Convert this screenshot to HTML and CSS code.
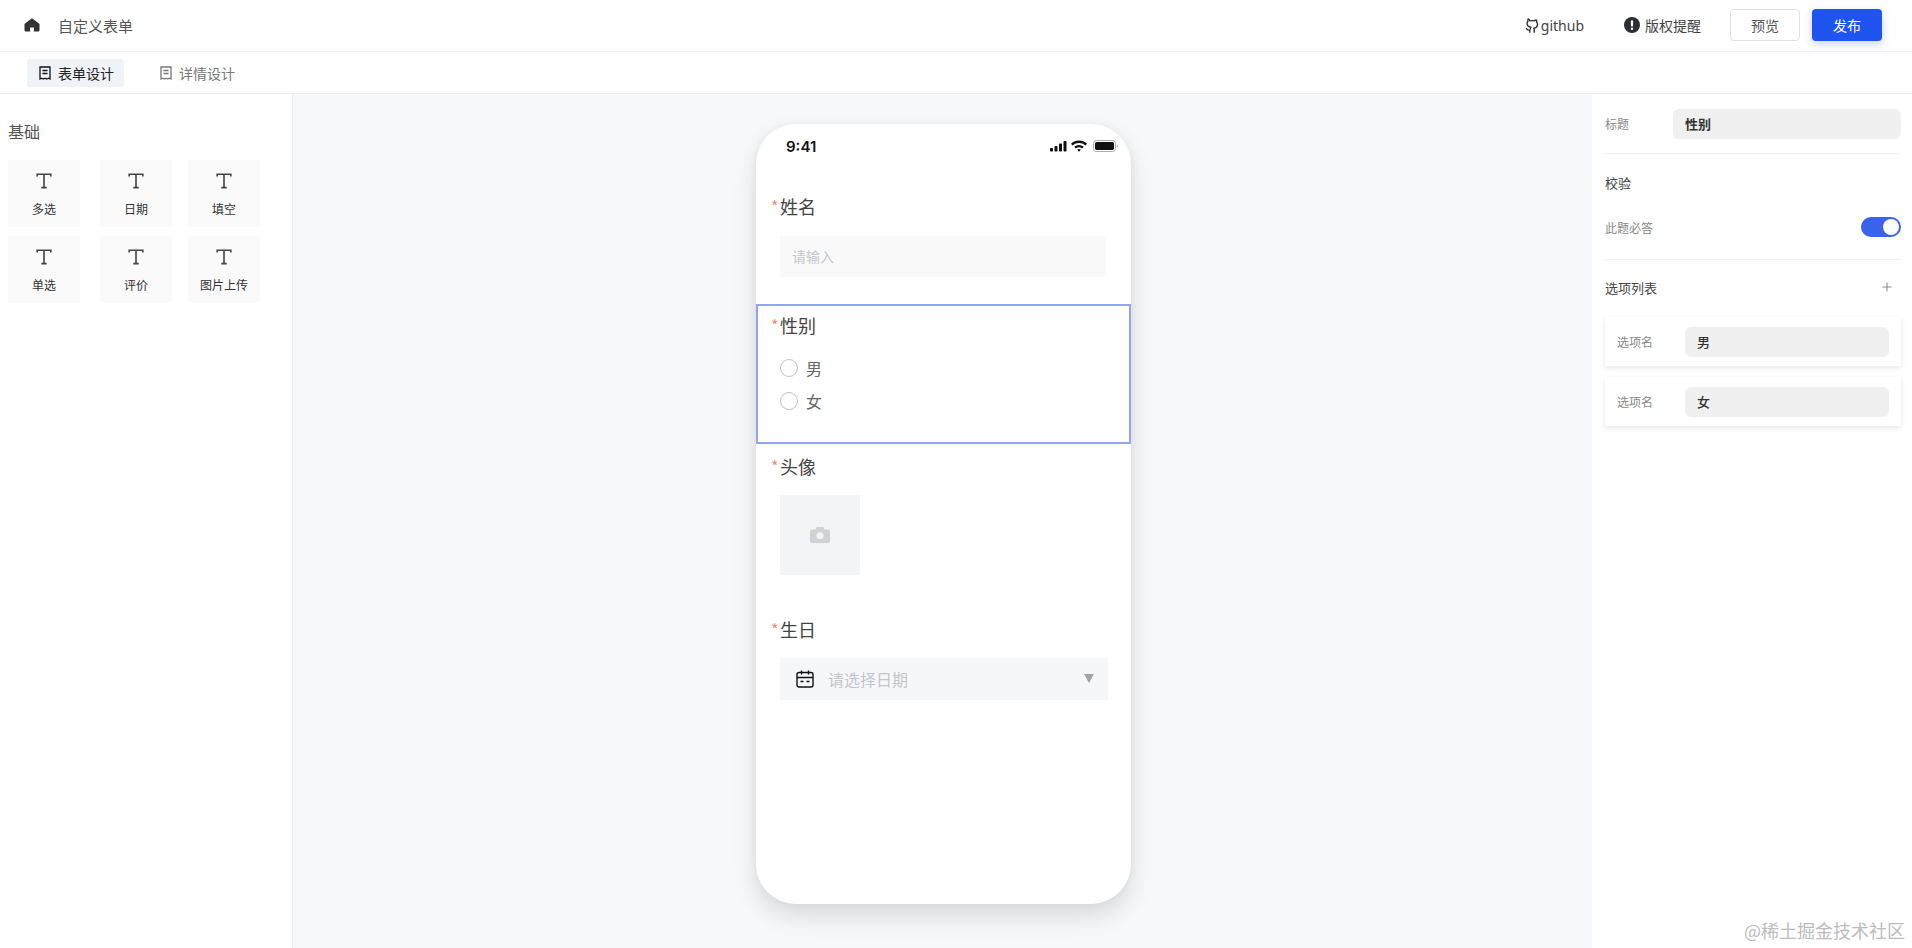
FILE: index.html
```html
<!DOCTYPE html>
<html>
<head>
    <title>自定义表单</title>
    <link rel="stylesheet" href="styles.css">
</head>
<body>
    <div class="app">
        <!-- Верхняя панель -->
        <header class="topbar">
            <svg class="home-icon" viewBox="0 0 16 16"><path d="M8 1.2 1 6.6c-.4.3-.5.6-.5 1V13c0 .9.7 1.6 1.6 1.6h4V10.500h3.800v4.100h4c.9 0 1.600-.7 1.600-1.600V7.600c0-.4-.1-.7-.5-1z"/></svg>
            <span class="app-title">自定义表单</span>
            <div class="top-actions">
                <span class="top-link top-link-github">
                    <svg class="github-icon" viewBox="0 0 16 16"><path d="M5.800 14.800v-2.300c-2.300.5-3-.6-3.300-1.400M10.200 14.800v-2.500c0-.7-.2-1.200-.6-1.500 2-.2 3.900-.9 3.900-4 0-.9-.3-1.600-.9-2.200.2-.6.2-1.300-.1-2.100-.8 0-1.500.3-2.300.9a8 8 0 0 0-4.400 0C5.600 1.800 4.900 1.500 4.100 1.500c-.3.8-.3 1.500-.1 2.100-.6.600-.9 1.300-.9 2.200 0 3.100 1.900 3.800 3.900 4-.4.300-.6.800-.6 1.500"/></svg>
                    github
                </span>
                <span class="top-link top-link-notice">
                    <svg class="notice-icon" viewBox="0 0 16 16"><circle cx="8" cy="8" r="8"/><rect class="notice-mark" x="6.900" y="3.200" width="2.200" height="6.300" rx="1"/><circle class="notice-mark" cx="8" cy="11.700" r="1.200"/></svg>
                    版权提醒
                </span>
                <button class="btn btn-ghost">预览</button>
                <button class="btn btn-primary">发布</button>
            </div>
        </header>

        <!-- Вкладки -->
        <nav class="tabbar">
            <span class="tab tab-active">
                <svg class="tab-icon" viewBox="0 0 12 14"><path d="M1 1h10v12l-1.600-.8-1.700.8L6 12.200l-1.700.8-1.700-.8L1 13zM3.500 4.500h5M3.500 7.500h5"/></svg>
                表单设计
            </span>
            <span class="tab">
                <svg class="tab-icon" viewBox="0 0 12 14"><path d="M1 1h10v12l-1.600-.8-1.700.8L6 12.200l-1.700.8-1.700-.8L1 13zM3.500 4.500h5M3.500 7.500h5"/></svg>
                详情设计
            </span>
        </nav>

        <div class="workspace">
            <!-- Левая колонка -->
            <aside class="sidebar">
                <div class="sidebar-title">基础</div>
                <div class="widget-grid">
                    <div class="widget"><svg class="t-icon" viewBox="0 0 16 16"><path d="M1.200 3.500V1.200h13.600v2.300M8 1.200v13.400M5.300 14.600h5.400"/></svg><span>多选</span></div>
                    <div class="widget"><svg class="t-icon" viewBox="0 0 16 16"><path d="M1.200 3.500V1.200h13.600v2.300M8 1.200v13.400M5.300 14.600h5.400"/></svg><span>日期</span></div>
                    <div class="widget"><svg class="t-icon" viewBox="0 0 16 16"><path d="M1.200 3.500V1.200h13.600v2.300M8 1.200v13.400M5.300 14.600h5.400"/></svg><span>填空</span></div>
                    <div class="widget"><svg class="t-icon" viewBox="0 0 16 16"><path d="M1.200 3.500V1.200h13.600v2.300M8 1.200v13.400M5.300 14.600h5.400"/></svg><span>单选</span></div>
                    <div class="widget"><svg class="t-icon" viewBox="0 0 16 16"><path d="M1.200 3.500V1.200h13.600v2.300M8 1.200v13.400M5.300 14.600h5.400"/></svg><span>评价</span></div>
                    <div class="widget"><svg class="t-icon" viewBox="0 0 16 16"><path d="M1.200 3.500V1.200h13.600v2.300M8 1.200v13.400M5.300 14.600h5.400"/></svg><span>图片上传</span></div>
                </div>
            </aside>

            <!-- Телефон -->
            <main class="canvas">
                <div class="phone">
                    <div class="statusbar">
                        <span class="clock">9:41</span>
                        <svg class="status-icons" viewBox="0 0 68 12">
                            <rect x="0" y="8" width="3" height="3.500" rx=".8"/>
                            <rect x="4.500" y="6" width="3" height="5.500" rx=".8"/>
                            <rect x="9" y="3.500" width="3" height="8" rx=".8"/>
                            <rect x="13.500" y="1" width="3" height="10.500" rx=".8"/>
                            <path d="M21 3.700a11.800 11.800 0 0 1 16 0l-1.600 1.700a9.500 9.500 0 0 0-12.800 0z"/>
                            <path d="M24.200 6.800a7 7 0 0 1 9.600 0l-1.700 1.700a4.700 4.700 0 0 0-6.200 0z"/>
                            <path d="M27.200 9.800a2.800 2.800 0 0 1 3.600 0L29 11.700z"/>
                            <rect class="battery-frame" x="43.500" y=".5" width="22" height="11" rx="3"/>
                            <rect x="45" y="2" width="19" height="8" rx="1.800"/>
                            <path class="battery-tip" d="M67 4.300c.7.300 1 1 1 1.700s-.3 1.400-1 1.700z"/>
                        </svg>
                    </div>

                    <section class="field field-name">
                        <div class="field-label"><i>*</i>姓名</div>
                        <div class="text-input">请输入</div>
                    </section>

                    <section class="field field-selected">
                        <div class="field-label"><i>*</i>性别</div>
                        <div class="radio-row"><span class="radio"></span>男</div>
                        <div class="radio-row"><span class="radio"></span>女</div>
                    </section>

                    <section class="field field-avatar">
                        <div class="field-label"><i>*</i>头像</div>
                        <div class="upload">
                            <svg class="camera-icon" viewBox="0 0 20 16"><path fill-rule="evenodd" d="M6.800 0h6.400l1.500 2.500h3.300c1.100 0 2 .9 2 2V14c0 1.100-.9 2-2 2H2c-1.100 0-2-.9-2-2V4.500c0-1.100.9-2 2-2h3.300zM10 5.300a3.500 3.500 0 1 0 0 7 3.500 3.500 0 0 0 0-7z"/></svg>
                        </div>
                    </section>

                    <section class="field field-birthday">
                        <div class="field-label"><i>*</i>生日</div>
                        <div class="date-input">
                            <svg class="calendar-icon" viewBox="0 0 18 18"><rect x="1" y="2.500" width="16" height="14.500" rx="2"/><path d="M1 7.500h16M5.500 .5v4M12.500 .5v4M4.500 11.500h3M10.500 11.500h3"/></svg>
                            <span class="date-text">请选择日期</span>
                            <span class="date-arrow"></span>
                        </div>
                    </section>
                </div>
            </main>

            <!-- Правая колонка -->
            <aside class="props">
                <div class="prop-row prop-title">
                    <span class="prop-label">标题</span>
                    <div class="prop-input">性别</div>
                </div>
                <div class="prop-heading prop-check">校验</div>
                <div class="prop-switch">
                    <span class="prop-label">此题必答</span>
                    <span class="toggle"><span class="toggle-knob"></span></span>
                </div>
                <div class="prop-heading prop-options">
                    选项列表
                    <svg class="plus-icon" viewBox="0 0 10 10"><path d="M5 .5v9M.5 5h9"/></svg>
                </div>
                <div class="option-card">
                    <span class="prop-label">选项名</span>
                    <div class="prop-input">男</div>
                </div>
                <div class="option-card">
                    <span class="prop-label">选项名</span>
                    <div class="prop-input">女</div>
                </div>
            </aside>
        </div>
    </div>
    <div class="watermark">@稀土掘金技术社区</div>
</body>
</html>
```

FILE: styles.css
```css
* {
    box-sizing: border-box;
}

body {
    margin: 0;
    padding: 0;
    font-family: "Noto Sans CJK SC", "Noto Sans", sans-serif;
    color: #333;
    background: #fff;
    overflow: hidden;
}

.app {
    display: flex;
    flex-direction: column;
    height: 948px;
}

/* Верхняя панель */
.topbar {
    height: 52px;
    flex: none;
    display: flex;
    align-items: center;
    padding: 0 30px 1px 24px;
    border-bottom: 1px solid #f1f1f1;
}

.home-icon {
    width: 16px;
    height: 16px;
    fill: #333;
}

.app-title {
    margin-left: 18px;
    font-size: 15px;
    color: #555;
}

.top-actions {
    margin-left: auto;
    display: flex;
    align-items: center;
}

.top-link {
    display: flex;
    align-items: center;
    font-size: 14px;
    color: #444;
}

.top-link-github {
    font-family: "Noto Sans", sans-serif;
    font-size: 14px;
    gap: 1px;
}

.top-link-notice {
    margin-left: 40px;
    gap: 5px;
}

.github-icon {
    width: 16px;
    height: 17px;
    fill: none;
    stroke: #333;
    stroke-width: 1.400;
    stroke-linejoin: round;
    stroke-linecap: round;
}

.notice-icon {
    width: 16px;
    height: 16px;
    fill: #2b2f33;
}

.notice-mark {
    fill: #fff;
}

.btn {
    width: 70px;
    height: 32px;
    border-radius: 4px;
    font-family: inherit;
    font-size: 14px;
    padding: 0;
}

.btn-ghost {
    margin-left: 29px;
    background: #fff;
    border: 1px solid #dfe1e5;
    color: #555;
}

.btn-primary {
    margin-left: 12px;
    background: #1f54f0;
    border: none;
    color: #fff;
    box-shadow: 0 3px 8px rgba(31, 84, 240, 0.25);
}

/* Вкладки */
.tabbar {
    height: 42px;
    flex: none;
    display: flex;
    align-items: center;
    padding: 0 0 0 27px;
    border-bottom: 1px solid #eeeeee;
}

.tab {
    height: 28px;
    display: flex;
    align-items: center;
    gap: 7px;
    padding: 0 10px 0 12px;
    margin-right: 24px;
    border-radius: 4px;
    font-size: 14px;
    color: #777;
    stroke: #777;
}

.tab-active {
    width: 97px;
    background: #eff2f6;
    color: #222;
    stroke: #111;
}

.tab-icon {
    width: 12px;
    height: 14px;
    fill: none;
    stroke-width: 1.300;
}

.workspace {
    flex: 1;
    display: flex;
    min-height: 0;
}

/* Левая колонка */
.sidebar {
    width: 293px;
    flex: none;
    padding: 25px 8px 0;
    border-right: 1px solid #eceef1;
}

.sidebar-title {
    font-size: 16px;
    line-height: 24px;
    color: #555;
}

.widget-grid {
    display: grid;
    grid-template-columns: 92px 88px 72px;
    grid-auto-rows: 67px;
    row-gap: 9px;
    margin-top: 17px;
}

.widget {
    width: 72px;
    display: flex;
    flex-direction: column;
    align-items: center;
    padding-top: 13px;
    background: #fafafa;
    border-radius: 2px;
    font-size: 12px;
    color: #333;
}

.widget span {
    margin-top: 11px;
    line-height: 18px;
}

.t-icon {
    width: 16px;
    height: 16px;
    fill: none;
    stroke: #444;
    stroke-width: 1.600;
}

/* Телефон */
.canvas {
    flex: 1;
    display: flex;
    justify-content: center;
    padding: 30px 0 0 2px;
    background: #f6f8fa;
}

.phone {
    width: 375px;
    height: 780px;
    border-radius: 40px;
    background: #fff;
    box-shadow: 0 12px 24px rgba(0, 0, 0, 0.12), 0 0 8px rgba(0, 0, 0, 0.05);
}

.statusbar {
    height: 44px;
    display: flex;
    align-items: center;
    justify-content: space-between;
    padding: 0 13px 0 30px;
}

.clock {
    font-family: Inter, Roboto, sans-serif;
    font-size: 15px;
    font-weight: 600;
    color: #111;
}

.status-icons {
    width: 68px;
    height: 12px;
    fill: #111;
}

.battery-frame {
    fill: none;
    stroke: #aaa;
}

.battery-tip {
    fill: #aaa;
}

.field {
    padding-left: 24px;
}

.field-label {
    position: relative;
    font-size: 18px;
    line-height: 26px;
    color: #444;
}

.field-label i {
    position: absolute;
    left: -9px;
    top: 3px;
    font-size: 16px;
    line-height: 20px;
    font-style: normal;
    color: #f08a80;
}

.field-name {
    height: 136px;
    padding-top: 25px;
}

.text-input {
    width: 326px;
    height: 41px;
    margin-top: 17px;
    padding-left: 12px;
    background: #f9f9fa;
    font-size: 14px;
    line-height: 41px;
    color: #c4c6ca;
}

.field-selected {
    height: 140px;
    margin-top: 0;
    padding-top: 6px;
    padding-left: 22px;
    border: 2px solid #93a6e8;
}

.radio-row {
    display: flex;
    align-items: center;
    gap: 8px;
    height: 18px;
    margin-top: 21px;
    font-size: 16px;
    color: #666;
}

.radio-row + .radio-row {
    margin-top: 15px;
}

.radio {
    width: 18px;
    height: 18px;
    border: 1px solid #bfc1c5;
    border-radius: 50%;
}

.field-avatar {
    height: 172px;
    padding-top: 9px;
}

.upload {
    width: 80px;
    height: 80px;
    margin-top: 16px;
    display: flex;
    align-items: center;
    justify-content: center;
    background: #f3f4f6;
}

.camera-icon {
    width: 20px;
    height: 16px;
    fill: #cfd1d4;
}

.date-input {
    width: 328px;
    height: 42px;
    margin-top: 16px;
    display: flex;
    align-items: center;
    padding-left: 16px;
    background: #f6f7f9;
}

.calendar-icon {
    width: 18px;
    height: 18px;
    fill: none;
    stroke: #111;
    stroke-width: 1.400;
}

.date-text {
    margin-left: 14px;
    font-size: 16px;
    color: #c3c5ca;
}

.date-arrow {
    margin-left: auto;
    margin-right: 14px;
    margin-bottom: 2px;
    border-left: 5px solid transparent;
    border-right: 5px solid transparent;
    border-top: 9px solid #a3a3a3;
}

/* Правая колонка */
.props {
    width: 320px;
    flex: none;
    padding: 15px 11px 0 13px;
    background: #fff;
}

.prop-label {
    font-size: 12px;
    color: #888;
}

.prop-row {
    display: flex;
    align-items: center;
}

.prop-title {
    height: 45px;
    padding-bottom: 15px;
    justify-content: space-between;
    border-bottom: 1px solid #f3f3f3;
}

.prop-input {
    height: 30px;
    padding-left: 12px;
    border-radius: 6px;
    background: #f0f0f0;
    font-size: 13px;
    font-weight: 500;
    line-height: 30px;
    color: #333;
}

.prop-title .prop-input {
    width: 228px;
    font-weight: 700;
}

.prop-heading {
    display: flex;
    align-items: center;
    justify-content: space-between;
    font-size: 13px;
    color: #444;
}

.prop-check {
    height: 20px;
    margin-top: 18px;
}

.prop-switch {
    display: flex;
    align-items: center;
    justify-content: space-between;
    height: 55px;
    padding-bottom: 10px;
    margin-top: 13px;
    border-bottom: 1px solid #f3f3f3;
}

.toggle {
    width: 40px;
    height: 20px;
    display: flex;
    justify-content: flex-end;
    align-items: center;
    padding-right: 2px;
    border-radius: 10px;
    background: #3a62ea;
}

.toggle-knob {
    width: 16px;
    height: 16px;
    border-radius: 50%;
    background: #fff;
}

.prop-options {
    height: 20px;
    margin-top: 17px;
    padding-right: 9px;
}

.plus-icon {
    width: 10px;
    height: 10px;
    fill: none;
    stroke: #888;
}

.option-card {
    height: 49px;
    display: flex;
    align-items: center;
    justify-content: space-between;
    margin-top: 11px;
    padding: 0 12px;
    background: #fff;
    box-shadow: 0 2px 5px rgba(0, 0, 0, 0.1);
}

.prop-options + .option-card {
    margin-top: 20px;
}

.option-card .prop-input {
    width: 204px;
}

.watermark {
    position: absolute;
    right: 7px;
    bottom: 5px;
    font-size: 18px;
    color: #bcbcbc;
}
```
